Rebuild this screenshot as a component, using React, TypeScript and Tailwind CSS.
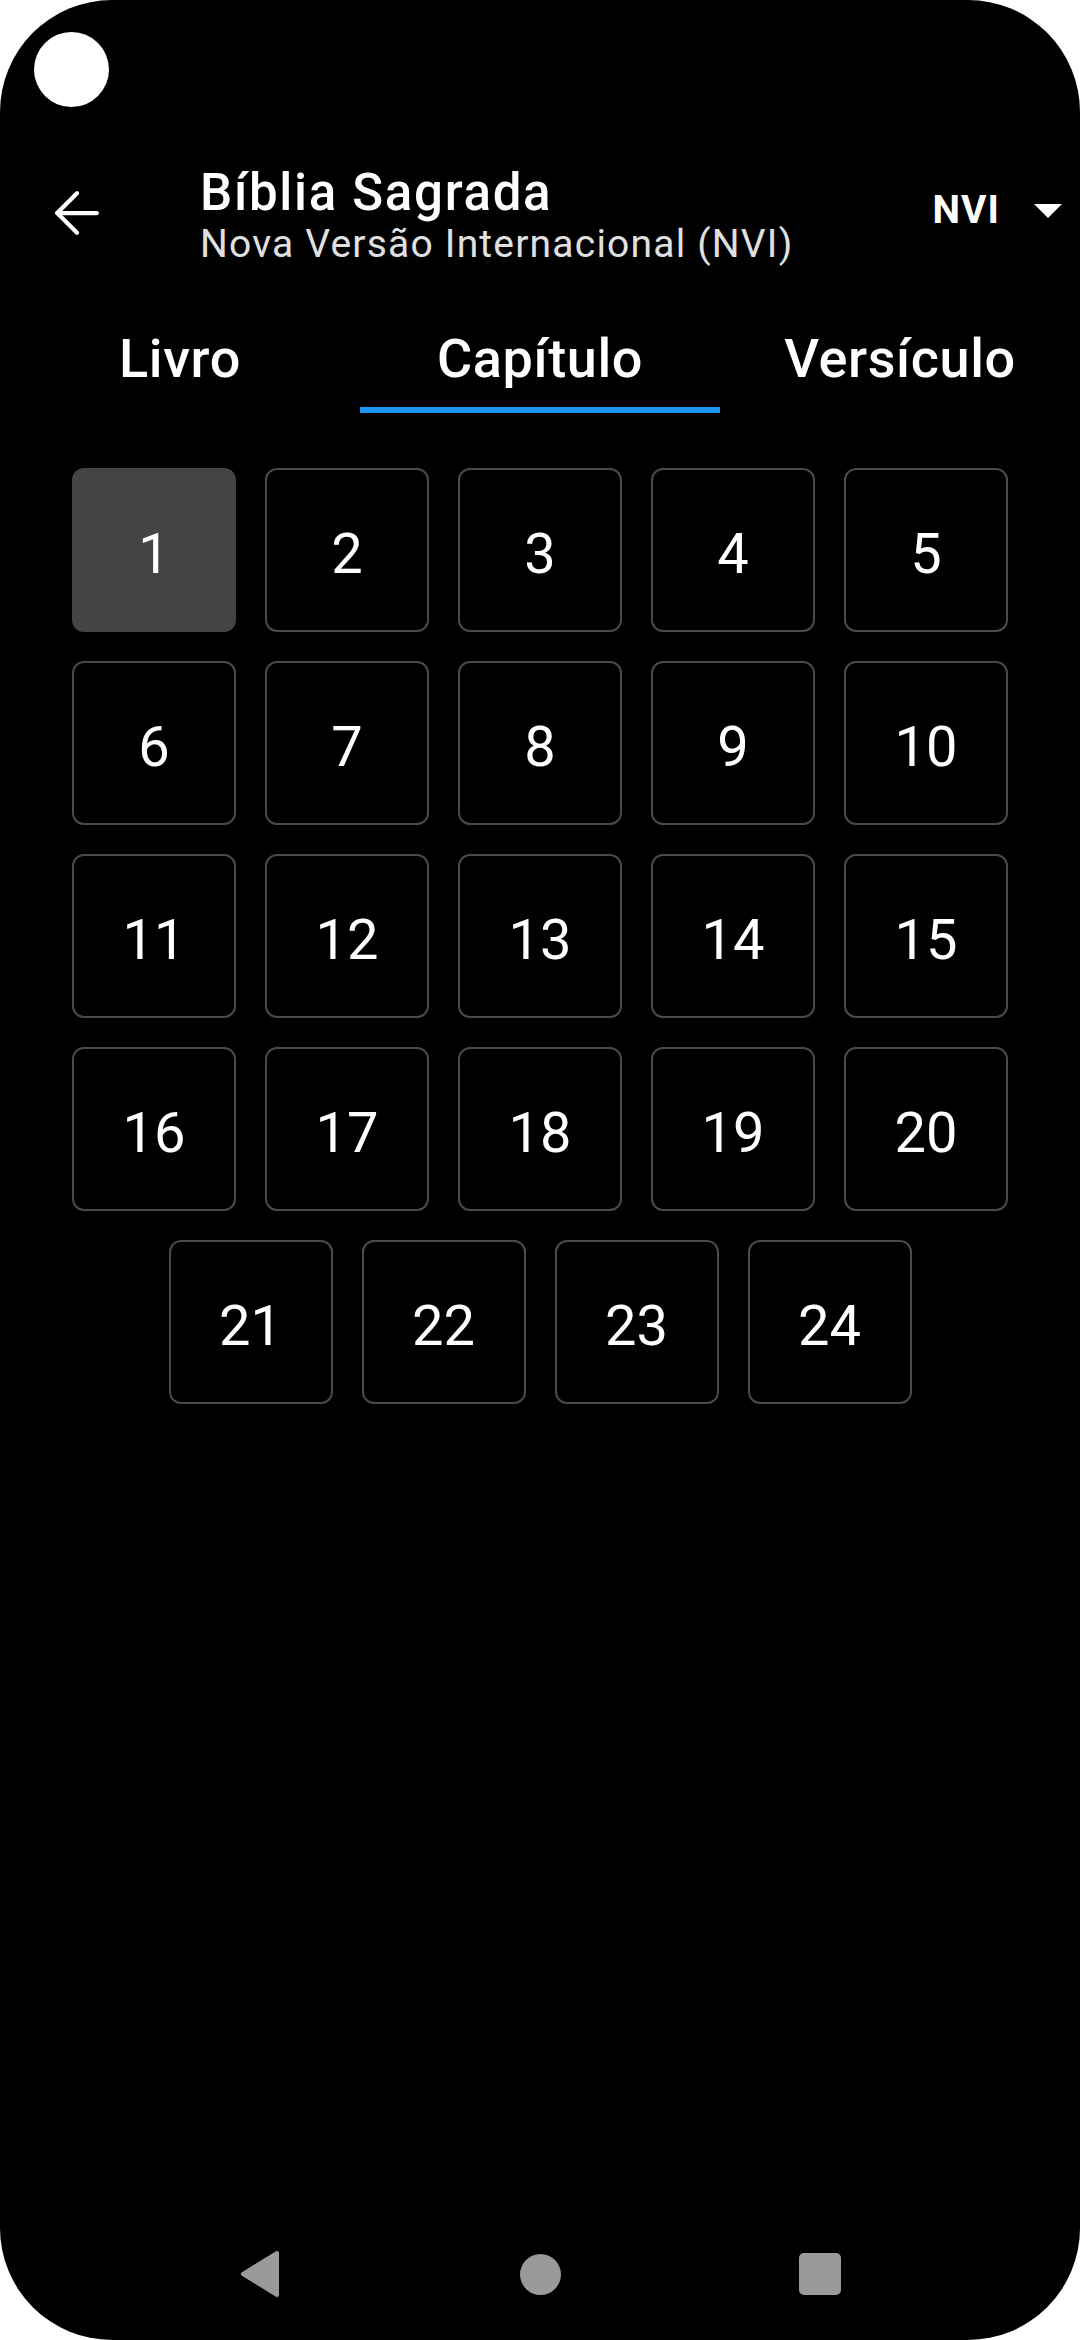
import { ArrowLeft } from "lucide-react";

const tabs = ["Livro", "Capítulo", "Versículo"];
const chapters = Array.from({ length: 24 }, (_, i) => i + 1);

function NavBar() {
  return (
    <div className="mt-auto flex h-[132px] items-center justify-center">
      <div className="flex w-[280px] justify-center">
        <svg width="42" height="48" viewBox="0 0 42 48">
          <path d="M38 3 L38 45 L4 24 Z" fill="#9a9a9a" stroke="#9a9a9a" strokeWidth="4" strokeLinejoin="round" />
        </svg>
      </div>
      <div className="flex w-[280px] justify-center">
        <div className="h-[41px] w-[41px] rounded-full bg-[#9a9a9a]" />
      </div>
      <div className="flex w-[280px] justify-center">
        <div className="h-[42px] w-[42px] rounded-[5px] bg-[#9a9a9a]" />
      </div>
    </div>
  );
}

export default function App() {
  const active = 1;
  const selected = 1;

  return (
    <div className="h-[2340px] w-[1080px] bg-white font-['Roboto',sans-serif]">
      <div className="flex h-full flex-col rounded-[112px] bg-black text-white">
        {/* status bar */}
        <div className="pl-[34px] pt-[32px]">
          <div className="h-[75px] w-[75px] rounded-full bg-white" />
        </div>

        {/* header */}
        <div className="mt-[60px] flex items-center pl-[43px] pr-[18px]">
          <ArrowLeft size={68} strokeWidth={1.5} className="mb-[6px] text-white" />
          <div className="ml-[89px] flex flex-col">
            <span className="text-[51px] font-medium leading-[51px] tracking-[1.7px]">Bíblia Sagrada</span>
            <span className="mt-[7px] text-[39px] leading-[39px] tracking-[1.2px] text-[#e0e0e0]">
              Nova Versão Internacional (NVI)
            </span>
          </div>
          <div className="mb-[10px] ml-auto flex items-center gap-[34px]">
            <span className="text-[39px] font-bold leading-[39px] tracking-[1px]">NVI</span>
            <svg width="28" height="14" viewBox="0 0 28 14">
              <path d="M0 0 L28 0 L14 14 Z" fill="white" />
            </svg>
          </div>
        </div>

        {/* tabs */}
        <div className="mt-[68px] grid grid-cols-3">
          {tabs.map((t, i) => (
            <div key={t} className="flex flex-col items-center">
              <span className="text-[54px] font-medium leading-[54px] tracking-[0.6px]">{t}</span>
              <div className={`mt-[21px] h-[6px] w-full ${i === active ? "bg-[#2196f3]" : "bg-transparent"}`} />
            </div>
          ))}
        </div>

        {/* chapters */}
        <div className="mx-auto mt-[55px] flex w-[936px] flex-wrap justify-center gap-[29px]">
          {chapters.map((n) => (
            <div
              key={n}
              className={`flex h-[164px] w-[164px] items-center justify-center rounded-[12px] pt-[8px] text-[56px] leading-none ${
                n === selected ? "bg-[#444444]" : "border-2 border-[#4a4a4a]"
              }`}
            >
              {n}
            </div>
          ))}
        </div>

        <NavBar />
      </div>
    </div>
  );
}
